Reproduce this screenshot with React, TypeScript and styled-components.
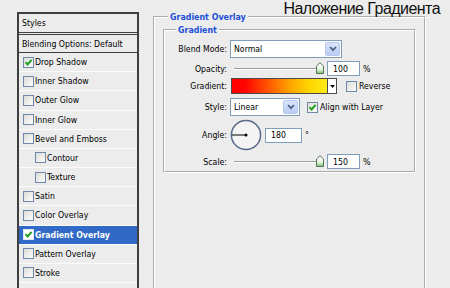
import React from 'react';
import styled, { createGlobalStyle } from 'styled-components';

const GlobalStyle = createGlobalStyle`
  * { box-sizing: border-box; }
  html, body { margin: 0; padding: 0; background: #ececec; }
  body {
    font-family: 'DejaVu Sans Condensed', 'Liberation Sans', Arial, sans-serif;
    font-size: 8.7px;
    color: #000;
  }
`;

const Window = styled.div`
  position: relative;
  width: 450px;
  height: 288px;
  overflow: hidden;
  display: flex;
  align-items: flex-start;
  gap: 14px;
  padding-left: 17px;
  background: #ececec;
`;

const Title = styled.div`
  position: absolute;
  top: 0;
  right: 10px;
  font-family: 'Liberation Sans', Arial, sans-serif;
  font-size: 16px;
  line-height: 17px;
  letter-spacing: -0.55px;
  color: #111;
`;

/* ---------- left: styles list ---------- */

const StylesPanel = styled.div`
  flex: none;
  width: 122px;
  margin-top: 12px;
  border: 2px solid #3f3f3f;
  border-bottom: none;
  display: flex;
  flex-direction: column;
`;

const PanelHeader = styled.div`
  height: 21px;
  padding-left: 3px;
  display: flex;
  align-items: center;
  border-bottom: 3px double #3f3f3f;
`;

const BlendingRow = styled.div`
  height: 18px;
  padding-left: 3px;
  display: flex;
  align-items: center;
  border-bottom: 1px solid #3f3f3f;
`;

const StyleRow = styled.div<{ $indent?: boolean; $selected?: boolean }>`
  height: 19.18px;
  flex: none;
  display: flex;
  align-items: center;
  gap: 1px;
  padding-left: ${p => (p.$indent ? 16 : 4)}px;
  border-bottom: 1px solid #fbfbfb;
  background: ${p => (p.$selected ? '#3169c6' : 'transparent')};
  color: ${p => (p.$selected ? '#fff' : '#000')};
  font-weight: ${p => (p.$selected ? 'bold' : 'normal')};
`;

const Box = styled.span<{ $light?: boolean }>`
  flex: none;
  width: 11px;
  height: 11px;
  border: 1px solid ${p => (p.$light ? '#dfe6f3' : '#6f87aa')};
  background: ${p => (p.$light ? '#fff' : 'linear-gradient(135deg, #dcdcd6, #fdfdfd)')};
  display: flex;
  align-items: center;
  justify-content: center;
`;

const Check: React.FC<{ on?: boolean; light?: boolean }> = ({ on, light }) => (
  <Box $light={light}>
    {on && (
      <svg width="9" height="9" viewBox="0 0 9 9">
        <path d="M1.5 4.2 L3.6 6.5 L7.6 1.8" fill="none" stroke="#21a121" strokeWidth="2" />
      </svg>
    )}
  </Box>
);

/* ---------- right: gradient overlay ---------- */

const Frame = styled.fieldset<{ $inner?: boolean }>`
  min-width: 0;
  margin: ${p => (p.$inner ? '1px 8px 0 8px' : '11px 0 0 0')};
  padding: ${p => (p.$inner ? '4px 0 2px 0' : '0')};
  width: ${p => (p.$inner ? 'auto' : '273px')};
  height: ${p => (p.$inner ? 'auto' : '300px')};
  flex: none;
  border: 2px groove #ffffff;
`;

const Legend = styled.legend<{ $inner?: boolean }>`
  margin-left: ${p => (p.$inner ? 11 : 13)}px;
  padding: 0 2px;
  line-height: 12px;
  font-size: 8.8px;
  font-weight: bold;
  color: #1d50d8;
`;

const FieldRow = styled.div<{ $h: number; $mt: number }>`
  display: flex;
  align-items: center;
  height: ${p => p.$h}px;
  margin-top: ${p => p.$mt}px;
`;

const Label = styled.div`
  flex: none;
  width: 62px;
  margin-right: 3px;
  text-align: right;
`;

const Select = styled.div<{ $w: number }>`
  width: ${p => p.$w}px;
  height: 18px;
  padding: 0 1px 0 3px;
  display: flex;
  align-items: center;
  border: 1px solid #7f9db9;
  background: #fff;
`;

const DropButton = styled.span`
  margin-left: auto;
  width: 15px;
  height: 14px;
  display: flex;
  align-items: center;
  justify-content: center;
  border: 1px solid #b7c8ee;
  border-radius: 2px;
  background: linear-gradient(#dbe5fb, #b9ccf4);
`;

const Chevron = () => (
  <svg width="8" height="6" viewBox="0 0 8 6">
    <path d="M1 1 L4 4.2 L7 1" fill="none" stroke="#4d6185" strokeWidth="1.8" />
  </svg>
);

const Slider = styled.div`
  position: relative;
  width: 94px;
  height: 100%;
`;

const Track = styled.div`
  margin: 7px 6px 0 4px;
  height: 2px;
  border-top: 1px solid #9d9d9d;
  border-bottom: 1px solid #fff;
`;

const Thumb = styled.svg`
  position: absolute;
  right: 0;
  top: 1px;
`;

const NumberBox = styled.div<{ $w: number }>`
  width: ${p => p.$w}px;
  height: 15px;
  margin-left: 3px;
  padding-left: 5px;
  display: flex;
  align-items: center;
  border: 1px solid #7f9db9;
  background: #fff;
`;

const Unit = styled.span`
  margin-left: 3px;
`;

const GradientPicker = styled.div`
  width: 106px;
  height: 16px;
  margin-left: 1px;
  display: flex;
  border: 1px solid #4a4a4a;
`;

const Swatch = styled.div`
  flex: 1;
  background: linear-gradient(
    to right,
    #ff0000 0%,
    #ff0500 14%,
    #ff6400 42%,
    #ffa800 62%,
    #ffd600 82%,
    #ffec18 100%
  );
`;

const SwatchArrow = styled.div`
  width: 9px;
  border-left: 1px solid #4a4a4a;
  background: #fff;
  display: flex;
  align-items: center;
  justify-content: center;
`;

const Toggle = styled.label<{ $ml: number }>`
  display: flex;
  align-items: center;
  gap: 2px;
  margin-left: ${p => p.$ml}px;
`;

const Dial = styled.svg`
  flex: none;
`;

const SliderControl: React.FC<{ value: string }> = ({ value }) => (
  <>
    <Slider>
      <Track />
      <Thumb width="8" height="12" viewBox="0 0 8 12">
        <defs>
          <linearGradient id={`th${value}`} x1="0" y1="0" x2="0" y2="1">
            <stop offset="0" stopColor="#ffffff" />
            <stop offset="0.6" stopColor="#e9f3e6" />
            <stop offset="1" stopColor="#6fc468" />
          </linearGradient>
        </defs>
        <path d="M0.5 4 L4 0.7 L7.5 4 L7.5 11.5 L0.5 11.5 Z" fill={`url(#th${value})`} stroke="#587458" strokeWidth="1" />
      </Thumb>
    </Slider>
    <NumberBox $w={33}>{value}</NumberBox>
    <Unit>%</Unit>
  </>
);

const layers = [
  { name: 'Drop Shadow', on: true },
  { name: 'Inner Shadow' },
  { name: 'Outer Glow' },
  { name: 'Inner Glow' },
  { name: 'Bevel and Emboss' },
  { name: 'Contour', indent: true },
  { name: 'Texture', indent: true },
  { name: 'Satin' },
  { name: 'Color Overlay' },
  { name: 'Gradient Overlay', on: true, selected: true },
  { name: 'Pattern Overlay' },
  { name: 'Stroke' },
  { name: '' },
];

export default function App() {
  return (
    <>
      <GlobalStyle />
      <Window>
        <StylesPanel>
          <PanelHeader>Styles</PanelHeader>
          <BlendingRow>Blending Options: Default</BlendingRow>
          {layers.map((l, i) => (
            <StyleRow key={i} $indent={l.indent} $selected={l.selected}>
              {l.name && <Check on={l.on} light={l.selected} />}
              {l.name}
            </StyleRow>
          ))}
        </StylesPanel>

        <Frame>
          <Legend>Gradient Overlay</Legend>
          <Frame $inner>
            <Legend $inner>Gradient</Legend>

            <FieldRow $h={18} $mt={0}>
              <Label>Blend Mode:</Label>
              <Select $w={112}>
                Normal
                <DropButton><Chevron /></DropButton>
              </Select>
            </FieldRow>

            <FieldRow $h={15} $mt={3}>
              <Label>Opacity:</Label>
              <SliderControl value="100" />
            </FieldRow>

            <FieldRow $h={16} $mt={2}>
              <Label>Gradient:</Label>
              <GradientPicker>
                <Swatch />
                <SwatchArrow>
                  <svg width="5" height="3" viewBox="0 0 5 3">
                    <path d="M0 0 H5 L2.5 3 Z" fill="#000" />
                  </svg>
                </SwatchArrow>
              </GradientPicker>
              <Toggle $ml={9}>
                <Check />
                Reverse
              </Toggle>
            </FieldRow>

            <FieldRow $h={18} $mt={4}>
              <Label>Style:</Label>
              <Select $w={70}>
                Linear
                <DropButton><Chevron /></DropButton>
              </Select>
              <Toggle $ml={7}>
                <Check on />
                Align with Layer
              </Toggle>
            </FieldRow>

            <FieldRow $h={32} $mt={3}>
              <Label>Angle:</Label>
              <Dial width="32" height="32" viewBox="0 0 32 32">
                <circle cx="16" cy="16" r="14.6" fill="#f3f3f3" stroke="#56698c" strokeWidth="1.5" />
                <line x1="2" y1="16" x2="16" y2="16" stroke="#000" strokeWidth="1" />
                <circle cx="16" cy="16" r="1.5" fill="#000" />
              </Dial>
              <NumberBox $w={37}>180</NumberBox>
              <Unit>°</Unit>
            </FieldRow>

            <FieldRow $h={15} $mt={3}>
              <Label>Scale:</Label>
              <SliderControl value="150" />
            </FieldRow>
          </Frame>
        </Frame>

        <Title>Наложение Градиента</Title>
      </Window>
    </>
  );
}
